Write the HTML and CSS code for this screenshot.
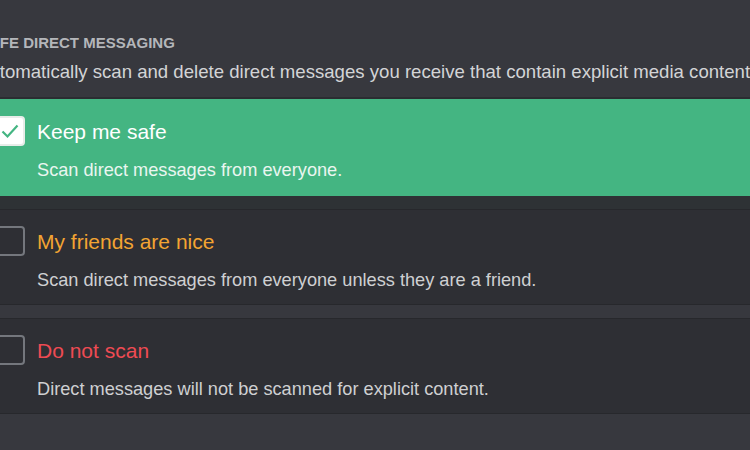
FILE: index.html
```html
<!DOCTYPE html>
<html lang="en">
<head>
  <meta charset="UTF-8">
  <meta name="viewport" content="width=device-width, initial-scale=1.0">
  <title>Privacy &amp; Safety</title>
  <link rel="stylesheet" href="styles.css">
</head>
<body>
  <div class="panel">
    <h5 class="heading">Safe Direct Messaging</h5>
    <div class="note">Automatically scan and delete direct messages you receive that contain explicit media content.</div>

    <div class="options">
      <div class="option option-checked">
        <span class="box box-checked">
          <svg width="24" height="24" viewBox="0 0 24 24"><polyline points="4.5 12.5 9.5 17.5 19.5 6.5" fill="none" stroke="#44b582" stroke-width="2.2"/></svg>
        </span>
        <div class="option-text">
          <div class="title">Keep me safe</div>
          <div class="desc">Scan direct messages from everyone.</div>
        </div>
      </div>

      <div class="option">
        <span class="box"></span>
        <div class="option-text">
          <div class="title title-warn">My friends are nice</div>
          <div class="desc">Scan direct messages from everyone unless they are a friend.</div>
        </div>
      </div>

      <div class="option">
        <span class="box"></span>
        <div class="option-text">
          <div class="title title-danger">Do not scan</div>
          <div class="desc">Direct messages will not be scanned for explicit content.</div>
        </div>
      </div>
    </div>
  </div>
</body>
</html>
```

FILE: styles.css
```css
html, body {
  margin: 0;
  padding: 0;
  height: 100%;
  overflow: hidden;
  background: #37383e;
}
body {
  font-family: "Liberation Sans", Arial, sans-serif;
}
.panel {
  width: 820px;
  margin-left: -21px;
  padding-top: 33px;
}
.heading {
  margin: 0;
  font-size: 15px;
  line-height: 20px;
  font-weight: 700;
  text-transform: uppercase;
  color: #b4b6ba;
}
.note {
  margin: 8px 0 0 -2px;
  font-size: 18.6px;
  line-height: 22px;
  color: #d3d4d6;
  white-space: nowrap;
}
.options {
  margin-top: 14px;
}
.option {
  display: flex;
  align-items: flex-start;
  gap: 12px;
  padding: 19px 0 13px 16px;
  background: #2e2f34;
  border-top: 1px solid #27282c;
  border-bottom: 1px solid #27282c;
  margin-bottom: 13px;
}
.option-checked {
  background: #44b582;
  padding: 20px 0 15px 16px;
  border-top: 2px solid #2b2d31;
  border-bottom: 13px solid #2e3235;
  margin-bottom: 0;
}
.box {
  flex: none;
  width: 30px;
  height: 30px;
  margin-top: -3px;
  box-sizing: border-box;
  border: 2px solid #74777d;
  border-radius: 4px;
  display: flex;
  align-items: center;
  justify-content: center;
}
.box-checked {
  background: #fff;
  border-color: #e8ece9;
}
.title {
  font-size: 21px;
  line-height: 26px;
  color: #fff;
}
.title-warn { color: #f3a432; }
.title-danger { color: #ee4b53; }
.desc {
  margin-top: 14px;
  font-size: 18.2px;
  line-height: 22px;
  color: #cfd0d2;
  white-space: nowrap;
}
.option-checked .desc {
  color: #eaf6f0;
}
```
